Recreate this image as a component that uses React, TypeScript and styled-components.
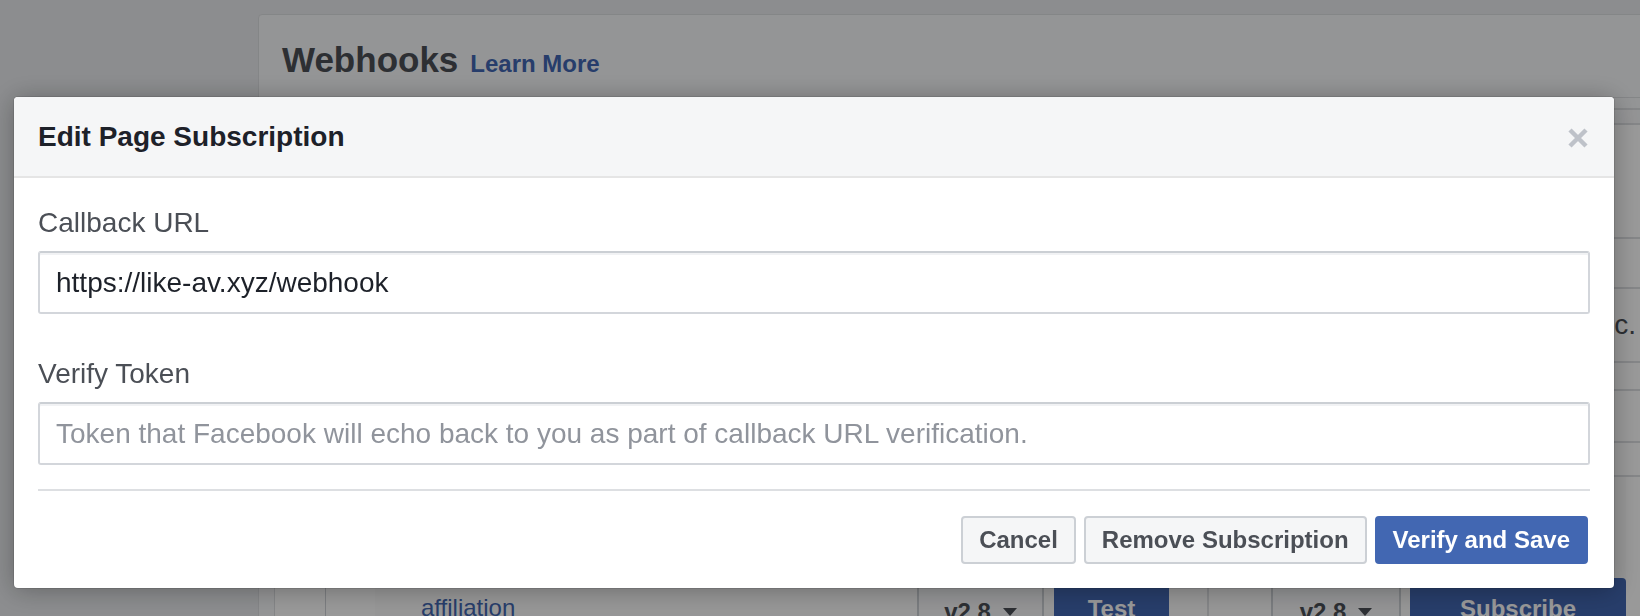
import React from "react";
import styled, { createGlobalStyle } from "styled-components";

const FONT = `"Liberation Sans", Arial, Helvetica, sans-serif`;

const GlobalStyle = createGlobalStyle`
  html, body { margin: 0; padding: 0; }
  body {
    width: 1640px;
    height: 616px;
    overflow: hidden;
    background: #e9ebee;
    font-family: ${FONT};
  }
  * { box-sizing: border-box; }
`;

/* ---------- background page ---------- */

const Page = styled.div`
  height: 616px;
  padding: 14px 0 0 258px;
  overflow: hidden;
`;

const Card = styled.section`
  width: 1420px;
  height: 720px;
  background: #f7f8fa;
  border: 1px solid #dddfe2;
  border-radius: 4px 4px 0 0;
`;

const CardHeader = styled.header`
  height: 83px;
  padding: 25px 0 0 23px;
  display: flex;
  align-items: baseline;
  gap: 12px;
  border-bottom: 1px solid #dddfe2;
`;

const PageTitle = styled.h1`
  margin: 0;
  font-size: 35px;
  line-height: 40px;
  font-weight: 700;
  color: #4b4f56;
`;

const LearnMore = styled.a`
  font-size: 24px;
  font-weight: 700;
  color: #4267b2;
  text-decoration: none;
`;

const CardBody = styled.div`
  padding: 10px 0 0 15px;
`;

const Table = styled.div`
  width: 1366px;
  border-top: 2px solid #dddfe2;
  border-left: 1px solid #dddfe2;
  background: #fff;
`;

const Row = styled.div<{ $h: number; $shade?: boolean }>`
  height: ${(p) => p.$h}px;
  border-bottom: 2px solid #dddfe2;
  background: ${(p) => (p.$shade ? "#f6f7f9" : "#fff")};
  display: flex;
  align-items: center;
  justify-content: flex-end;
  padding-right: 4px;
`;

const RowText = styled.span`
  font-size: 28px;
  line-height: 32px;
  color: #4b4f56;
`;

const FieldRow = styled.div`
  display: flex;
  align-items: flex-start;
  height: 200px;
`;

const CheckCol = styled.div`
  width: 51px;
  height: 100%;
  border-right: 1px solid #cfd2d7;
`;

const IconCol = styled.div`
  width: 49px;
  height: 100%;
`;

const NameCol = styled.div`
  width: 542px;
  height: 100%;
  padding: 117px 0 0 46px;
  background: #fbfbfc;
  font-size: 24px;
  line-height: 28px;
  color: #4267b2;
`;

const ActionGroup = styled.div`
  display: flex;
  align-items: flex-start;
  padding-top: 101px;
  height: 100%;
  background: #fbfbfc;
`;

const VersionSelect = styled.div<{ $w: number }>`
  width: ${(p) => p.$w}px;
  height: 62px;
  margin-top: 3px;
  border: 2px solid #ccd0d5;
  background: #f6f7f9;
  display: flex;
  align-items: center;
  justify-content: center;
  gap: 12px;
  font-size: 24px;
  font-weight: 700;
  color: #4b4f56;
`;

const Caret = styled.span`
  width: 0;
  height: 0;
  border-left: 7px solid transparent;
  border-right: 7px solid transparent;
  border-top: 8px solid #4b4f56;
`;

const BlueButton = styled.div<{ $w: number }>`
  width: ${(p) => p.$w}px;
  height: 62px;
  border-radius: 4px 4px 0 0;
  background: #4267b2;
  color: #fff;
  font-size: 24px;
  font-weight: 700;
  display: flex;
  align-items: center;
  justify-content: center;
`;

const Gap = styled.div<{ $w: number; $line?: boolean }>`
  width: ${(p) => p.$w}px;
  height: 100%;
  border-right: ${(p) => (p.$line ? "2px solid #dddfe2" : "none")};
`;

/* ---------- dialog ---------- */

const Overlay = styled.div`
  position: fixed;
  inset: 0;
  background: rgba(0, 0, 0, 0.4);
  display: flex;
  align-items: flex-start;
  padding: 97px 0 0 14px;
`;

const Modal = styled.div`
  width: 1600px;
  background: #fff;
  border-radius: 4px;
  overflow: hidden;
  box-shadow: 0 2px 26px rgba(0, 0, 0, 0.3), 0 0 0 1px rgba(0, 0, 0, 0.1);
`;

const ModalHeader = styled.div`
  height: 81px;
  background: #f5f6f7;
  border-bottom: 2px solid #e5e5e5;
  display: flex;
  align-items: center;
  justify-content: space-between;
  padding: 0 26px 0 24px;
`;

const ModalTitle = styled.h2`
  margin: 0;
  font-size: 28px;
  line-height: 32px;
  font-weight: 700;
  color: #1d2129;
`;

const CloseButton = styled.button`
  width: 20px;
  height: 20px;
  margin-top: 3px;
  padding: 0;
  border: 0;
  background: none;
  display: flex;
`;

const ModalBody = styled.div`
  padding: 29px 24px 0;
`;

const Field = styled.div`
  display: flex;
  flex-direction: column;
  gap: 12px;
  & + & {
    margin-top: 44px;
  }
`;

const Label = styled.label`
  font-size: 28px;
  line-height: 32px;
  color: #4b4f56;
`;

const TextInput = styled.input`
  height: 63px;
  width: 100%;
  padding: 0 16px;
  border: 2px solid #d3d6db;
  border-top-color: #cbcfd4;
  border-radius: 3px;
  box-shadow: inset 0 2px 0 #f1f2f4;
  font-family: ${FONT};
  font-size: 28px;
  color: #1d2129;
  background: #fff;
  outline: none;
  &::placeholder {
    color: #90949c;
  }
`;

const Footer = styled.div`
  margin: 24px 24px 0;
  padding: 25px 2px 24px 0;
  border-top: 2px solid #dddfe2;
  display: flex;
  justify-content: flex-end;
  gap: 8px;
`;

const Button = styled.button<{ $primary?: boolean }>`
  height: 48px;
  padding: 0 16px;
  border: 2px solid ${(p) => (p.$primary ? "#4267b2" : "#ccd0d5")};
  border-radius: 4px;
  background: ${(p) => (p.$primary ? "#4267b2" : "#f5f6f7")};
  color: ${(p) => (p.$primary ? "#fff" : "#4b4f56")};
  font-family: ${FONT};
  font-size: 24px;
  font-weight: 700;
  line-height: 28px;
  cursor: pointer;
`;

const CloseIcon = () => (
  <svg width="20" height="20" viewBox="0 0 20 20">
    <path d="M2 2 L18 18 M18 2 L2 18" stroke="#bec2c9" strokeWidth="4.5" fill="none" />
  </svg>
);

export default function App() {
  return (
    <>
      <GlobalStyle />
      <Page>
        <Card>
          <CardHeader>
            <PageTitle>Webhooks</PageTitle>
            <LearnMore>Learn More</LearnMore>
          </CardHeader>
          <CardBody>
            <Table>
              <Row $h={15} $shade />
              <Row $h={114} />
              <Row $h={50} />
              <Row $h={74}>
                <RowText>Facebook, Inc.</RowText>
              </Row>
              <Row $h={28} />
              <Row $h={52} />
              <Row $h={34} />
              <FieldRow>
                <CheckCol />
                <IconCol />
                <NameCol>affiliation</NameCol>
                <ActionGroup>
                  <VersionSelect $w={127}>
                    v2.8 <Caret />
                  </VersionSelect>
                  <Gap $w={10} />
                  <BlueButton $w={115}>Test</BlueButton>
                  <Gap $w={40} $line />
                  <Gap $w={62} />
                  <VersionSelect $w={130}>
                    v2.8 <Caret />
                  </VersionSelect>
                  <Gap $w={9} />
                  <BlueButton $w={216}>Subscribe</BlueButton>
                </ActionGroup>
              </FieldRow>
            </Table>
          </CardBody>
        </Card>
      </Page>

      <Overlay>
        <Modal>
          <ModalHeader>
            <ModalTitle>Edit Page Subscription</ModalTitle>
            <CloseButton aria-label="Close">
              <CloseIcon />
            </CloseButton>
          </ModalHeader>
          <ModalBody>
            <Field>
              <Label>Callback URL</Label>
              <TextInput value="https://like-av.xyz/webhook" readOnly />
            </Field>
            <Field>
              <Label>Verify Token</Label>
              <TextInput placeholder="Token that Facebook will echo back to you as part of callback URL verification." />
            </Field>
          </ModalBody>
          <Footer>
            <Button>Cancel</Button>
            <Button>Remove Subscription</Button>
            <Button $primary>Verify and Save</Button>
          </Footer>
        </Modal>
      </Overlay>
    </>
  );
}
